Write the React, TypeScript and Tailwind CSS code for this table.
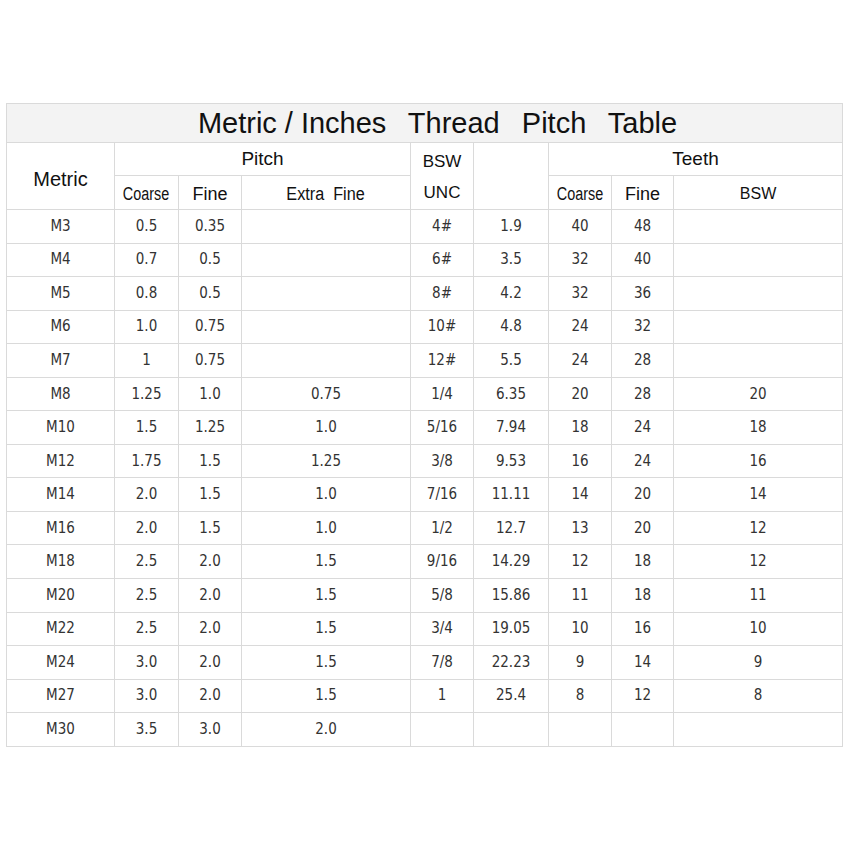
import React from "react";

const rows: string[][] = [
  ["M3", "0.5", "0.35", "", "4#", "1.9", "40", "48", ""],
  ["M4", "0.7", "0.5", "", "6#", "3.5", "32", "40", ""],
  ["M5", "0.8", "0.5", "", "8#", "4.2", "32", "36", ""],
  ["M6", "1.0", "0.75", "", "10#", "4.8", "24", "32", ""],
  ["M7", "1", "0.75", "", "12#", "5.5", "24", "28", ""],
  ["M8", "1.25", "1.0", "0.75", "1/4", "6.35", "20", "28", "20"],
  ["M10", "1.5", "1.25", "1.0", "5/16", "7.94", "18", "24", "18"],
  ["M12", "1.75", "1.5", "1.25", "3/8", "9.53", "16", "24", "16"],
  ["M14", "2.0", "1.5", "1.0", "7/16", "11.11", "14", "20", "14"],
  ["M16", "2.0", "1.5", "1.0", "1/2", "12.7", "13", "20", "12"],
  ["M18", "2.5", "2.0", "1.5", "9/16", "14.29", "12", "18", "12"],
  ["M20", "2.5", "2.0", "1.5", "5/8", "15.86", "11", "18", "11"],
  ["M22", "2.5", "2.0", "1.5", "3/4", "19.05", "10", "16", "10"],
  ["M24", "3.0", "2.0", "1.5", "7/8", "22.23", "9", "14", "9"],
  ["M27", "3.0", "2.0", "1.5", "1", "25.4", "8", "12", "8"],
  ["M30", "3.5", "3.0", "2.0", "", "", "", "", ""],
];

const widths = [108, 64, 63, 169, 63, 75, 63, 62, 169];

export default function App() {
  const hd = "border border-[#dadada] text-center font-normal text-[#111] p-0";
  return (
    <div className="w-[850px] h-[850px] bg-white pt-[103px] pl-[6px]">
      <table
        className="border-collapse table-fixed w-[836px]"
        style={{ fontFamily: '"Liberation Sans", Arial, sans-serif' }}
      >
        <colgroup>
          {widths.map((w, i) => (
            <col key={i} style={{ width: w }} />
          ))}
        </colgroup>
        <thead>
          <tr className="h-[39px]">
            <th
              colSpan={9}
              className="border border-[#dadada] bg-[#f3f3f3] text-center font-normal text-[29px] text-[#111] [word-spacing:14px] p-0 pl-[26px] leading-none"
            >
              Metric<span className="mx-[8px]">/</span>Inches Thread Pitch Table
            </th>
          </tr>
          <tr className="h-[33px]">
            <th rowSpan={2} className={`${hd} text-[20px] pt-[5px]`}>
              Metric
            </th>
            <th colSpan={3} className={`${hd} text-[19px]`}>
              Pitch
            </th>
            <th className={`${hd} text-[17px] border-b-0 pt-[4px]`}>BSW</th>
            <th rowSpan={2} className={hd}></th>
            <th colSpan={3} className={`${hd} text-[19px]`}>
              Teeth
            </th>
          </tr>
          <tr className="h-[34px]">
            <th className={`${hd} text-[18px] pt-[3px]`}>
              <span className="inline-block scale-x-80">Coarse</span>
            </th>
            <th className={`${hd} text-[18px] pt-[3px]`}>Fine</th>
            <th className={`${hd} text-[18px] pt-[3px]`}>
              <span className="inline-block scale-x-90 whitespace-pre">
                Extra  Fine
              </span>
            </th>
            <th className={`${hd} text-[17px] border-t-0`}>UNC</th>
            <th className={`${hd} text-[18px] pt-[3px]`}>
              <span className="inline-block scale-x-80">Coarse</span>
            </th>
            <th className={`${hd} text-[18px] pt-[3px]`}>Fine</th>
            <th className={`${hd} text-[16px] pt-[3px]`}>BSW</th>
          </tr>
        </thead>
        <tbody
          className="text-[#333] text-[15px]"
          style={{
            fontFamily:
              '"DejaVu Sans Condensed", "DejaVu Sans", Verdana, sans-serif',
          }}
        >
          {rows.map((r, i) => (
            <tr key={i} className="h-[33.55px]">
              {r.map((c, j) => (
                <td
                  key={j}
                  className="border border-[#dadada] text-center p-0 leading-none"
                >
                  {c}
                </td>
              ))}
            </tr>
          ))}
        </tbody>
      </table>
    </div>
  );
}
